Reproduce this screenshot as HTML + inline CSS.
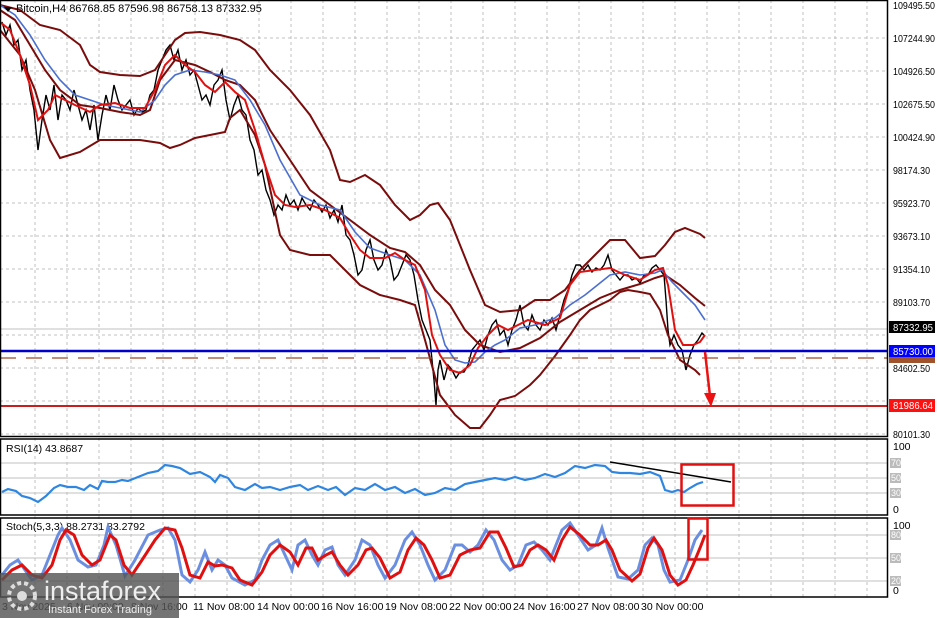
<!DOCTYPE html>
<html><head><meta charset="utf-8"><style>
html,body{margin:0;padding:0;background:#fff;width:937px;height:618px;overflow:hidden}
svg{display:block;font-family:"Liberation Sans",sans-serif}
</style></head><body>
<svg width="937" height="618" viewBox="0 0 937 618" xmlns="http://www.w3.org/2000/svg">
<rect width="937" height="618" fill="#fff"/>
<g stroke="#c0c0c0" stroke-dasharray="3,3" stroke-width="1">
<line x1="35" y1="0" x2="35" y2="597"/><line x1="67" y1="0" x2="67" y2="597"/><line x1="99" y1="0" x2="99" y2="597"/><line x1="131" y1="0" x2="131" y2="597"/><line x1="163" y1="0" x2="163" y2="597"/><line x1="195" y1="0" x2="195" y2="597"/><line x1="227" y1="0" x2="227" y2="597"/><line x1="259" y1="0" x2="259" y2="597"/><line x1="291" y1="0" x2="291" y2="597"/><line x1="323" y1="0" x2="323" y2="597"/><line x1="355" y1="0" x2="355" y2="597"/><line x1="387" y1="0" x2="387" y2="597"/><line x1="419" y1="0" x2="419" y2="597"/><line x1="451" y1="0" x2="451" y2="597"/><line x1="483" y1="0" x2="483" y2="597"/><line x1="515" y1="0" x2="515" y2="597"/><line x1="547" y1="0" x2="547" y2="597"/><line x1="579" y1="0" x2="579" y2="597"/><line x1="611" y1="0" x2="611" y2="597"/><line x1="643" y1="0" x2="643" y2="597"/><line x1="675" y1="0" x2="675" y2="597"/><line x1="707" y1="0" x2="707" y2="597"/><line x1="739" y1="0" x2="739" y2="597"/><line x1="771" y1="0" x2="771" y2="597"/><line x1="803" y1="0" x2="803" y2="597"/><line x1="835" y1="0" x2="835" y2="597"/><line x1="867" y1="0" x2="867" y2="597"/>
<line x1="0" y1="38" x2="887" y2="38"/><line x1="0" y1="71" x2="887" y2="71"/><line x1="0" y1="104" x2="887" y2="104"/><line x1="0" y1="137" x2="887" y2="137"/><line x1="0" y1="170" x2="887" y2="170"/><line x1="0" y1="203" x2="887" y2="203"/><line x1="0" y1="236" x2="887" y2="236"/><line x1="0" y1="269" x2="887" y2="269"/><line x1="0" y1="302" x2="887" y2="302"/><line x1="0" y1="335" x2="887" y2="335"/><line x1="0" y1="368" x2="887" y2="368"/><line x1="0" y1="401" x2="887" y2="401"/><line x1="0" y1="434" x2="887" y2="434"/>
</g>
<g stroke="#c0c0c0"><line x1="0" y1="463" x2="887" y2="463"/><line x1="0" y1="478" x2="887" y2="478"/><line x1="0" y1="493" x2="887" y2="493"/><line x1="0" y1="535" x2="887" y2="535"/><line x1="0" y1="558" x2="887" y2="558"/><line x1="0" y1="581" x2="887" y2="581"/><line x1="0" y1="329" x2="887" y2="329"/></g>
<polyline fill="none" stroke="#000" stroke-width="1.4" points="2,22 6,35 10,25 14,45 18,40 22,70 26,60 30,90 34,110 38,150 42,120 46,95 50,110 54,85 58,120 62,95 66,100 70,110 74,90 78,105 82,120 86,110 90,130 94,105 98,140 102,115 106,95 110,110 114,85 118,100 122,110 126,105 130,100 134,115 138,108 142,112 146,110 150,95 154,90 158,70 162,60 166,50 170,45 174,60 178,50 182,70 186,60 190,75 194,70 198,85 202,100 206,95 210,105 214,85 218,80 222,70 226,100 230,120 234,105 238,95 242,110 246,115 250,140 254,150 258,175 262,170 266,190 270,200 274,215 278,205 282,210 286,195 290,205 294,200 298,210 302,198 306,205 310,210 314,200 318,205 322,212 326,205 330,218 334,210 338,222 342,205 346,235 350,240 354,255 358,275 362,270 366,250 370,240 374,260 378,270 382,265 386,250 390,260 394,280 398,275 402,265 406,255 410,260 414,275 418,300 422,320 426,330 430,340 434,380 436,405 438,370 440,360 444,380 448,365 452,370 456,378 460,372 464,372 468,365 472,350 476,345 480,340 484,350 488,335 492,325 496,320 500,335 504,330 508,345 512,330 516,320 520,305 524,325 528,330 532,315 536,325 540,330 544,320 548,325 552,318 556,330 560,315 564,300 568,290 572,275 576,265 580,265 584,270 588,265 592,272 596,268 600,270 604,265 608,255 612,270 616,275 620,280 624,275 628,275 632,280 636,278 640,283 644,275 648,275 652,268 656,265 660,270 664,275 666,300 668,330 670,345 674,335 678,345 682,350 686,370 690,355 694,345 698,340 702,333 704,335"/>
<polyline fill="none" stroke="#7a0c0c" stroke-width="2" points="0,5 20,10 40,25 60,30 80,45 90,65 100,72 120,75 140,76 155,70 165,55 175,40 185,33 200,32 220,35 240,40 255,50 270,70 290,90 310,115 330,150 340,180 350,182 365,175 380,185 395,205 410,220 420,215 430,205 438,203 450,220 460,245 470,270 485,305 500,312 520,310 535,300 550,300 565,290 580,270 595,255 610,240 625,240 640,258 655,256 665,245 675,232 685,228 700,234 705,238"/>
<polyline fill="none" stroke="#7a0c0c" stroke-width="2" points="0,10 15,20 30,45 45,70 60,90 80,105 100,108 120,112 140,115 150,110 160,80 175,60 195,65 210,72 225,80 240,85 255,100 270,130 290,160 310,190 330,205 350,220 370,235 390,248 405,252 420,265 435,290 450,305 465,330 480,345 500,352 520,348 540,338 560,322 580,310 600,298 620,290 640,284 655,278 665,275 680,285 695,298 705,306"/>
<polyline fill="none" stroke="#7a0c0c" stroke-width="2" points="0,30 20,55 35,90 50,140 60,158 80,152 100,140 120,140 140,140 160,143 170,148 180,145 195,138 210,135 225,132 230,118 240,110 255,135 265,165 280,235 290,250 310,255 330,255 350,275 360,285 380,295 400,300 415,305 425,340 440,395 455,415 470,428 480,428 490,415 500,400 515,396 530,385 540,375 555,356 570,335 580,320 590,310 600,305 610,300 620,292 628,290 640,292 650,294 660,310 668,335 680,360 695,370 700,375"/>
<polyline fill="none" stroke="#4a6fd0" stroke-width="1.6" points="0,5 15,15 30,35 45,60 60,80 75,95 90,100 105,105 120,108 140,112 155,100 165,85 175,75 190,70 205,72 220,75 235,80 250,100 265,125 280,160 300,195 320,205 340,210 355,232 370,248 390,255 405,260 420,275 435,310 445,345 455,360 465,363 475,362 485,352 495,345 505,340 520,328 535,325 555,318 570,305 585,295 600,283 610,275 625,272 640,275 655,273 662,270 672,282 682,292 695,305 705,320"/>
<polyline fill="none" stroke="#e01010" stroke-width="2" points="0,22 10,30 20,55 30,85 38,120 48,110 55,95 65,100 75,105 90,112 100,105 115,103 130,108 145,108 155,90 165,65 175,55 185,65 195,72 205,85 215,92 225,82 235,92 245,100 255,130 265,165 275,195 285,205 295,207 310,205 325,210 340,218 350,235 360,250 370,258 385,258 395,253 405,260 415,265 425,290 432,335 440,355 450,370 460,373 470,365 478,348 488,335 498,325 508,330 518,325 528,320 545,325 560,318 570,285 580,272 595,270 610,268 625,275 640,280 655,270 663,268 668,285 675,330 683,345 693,345 700,342 705,335"/>
<line x1="0" y1="351" x2="887" y2="351" stroke="#0000c8" stroke-width="2.5"/>
<line x1="0" y1="358" x2="887" y2="358" stroke="#9a4a2a" stroke-width="1.2" stroke-dasharray="16,10"/>
<line x1="0" y1="406" x2="887" y2="406" stroke="#c81e1e" stroke-width="2"/>
<line x1="705" y1="352" x2="710" y2="396" stroke="#ee1111" stroke-width="2.5"/>
<polygon points="704,393 716,393 711,407" fill="#ee1111"/>
<g fill="none" stroke="#000" stroke-width="1.5">
<rect x="0.5" y="0.5" width="887" height="436"/>
<rect x="0.5" y="439" width="887" height="76"/>
<rect x="0.5" y="518" width="887" height="79"/>
</g>
<polygon points="4,7 12,7 8,12" fill="#000"/>
<text x="16" y="12" font-size="11" fill="#000">Bitcoin,H4  86768.85 87596.98 86758.13 87332.95</text>
<text x="6" y="452" font-size="10.5" fill="#000">RSI(14) 43.8687</text>
<polyline fill="none" stroke="#2f86e0" stroke-width="2.2" points="2,492 8,489 16,491 22,496 30,498 38,502 46,496 54,488 60,485 68,487 76,487 84,490 90,485 98,489 102,481 108,482 115,482 122,480 128,481 138,477 148,473 158,471 165,465 172,466 180,468 190,474 200,472 210,477 215,482 220,475 228,478 235,487 245,490 255,484 262,488 270,487 280,490 290,487 300,485 308,490 318,486 328,490 336,487 345,495 355,488 365,490 375,484 385,490 395,487 405,493 415,489 425,495 435,493 445,488 455,490 465,484 475,482 485,480 495,478 505,480 515,477 525,480 535,478 545,474 555,477 565,473 575,466 585,468 595,465 605,466 612,472 620,473 630,473 640,474 650,472 660,476 665,490 672,492 678,490 684,492 690,488 697,484 703,482"/>
<line x1="610" y1="462" x2="731" y2="482" stroke="#000" stroke-width="1.5"/>
<rect x="681.5" y="464.5" width="52" height="41" fill="none" stroke="#e01010" stroke-width="2.5"/>
<text x="6" y="530" font-size="10.5" fill="#000">Stoch(5,3,3) 88.2731 83.2792</text>
<polyline fill="none" stroke="#6b8fe0" stroke-width="3" points="2,575 10,565 18,560 25,570 32,580 42,575 50,555 58,535 62,528 70,540 78,560 88,567 96,565 104,545 108,527 116,545 125,576 135,560 148,535 160,530 168,528 175,540 182,575 190,582 198,570 205,552 212,570 218,560 225,565 232,578 245,585 255,580 262,560 270,545 278,540 285,555 292,570 298,545 305,540 312,555 318,565 325,550 332,547 338,565 345,575 355,560 362,540 370,545 378,565 385,578 395,565 405,540 412,532 420,545 428,565 435,580 445,570 455,545 462,545 470,552 478,545 486,530 494,540 502,560 510,570 518,565 526,545 534,542 542,550 550,560 556,545 562,530 570,523 578,535 588,550 596,545 602,528 608,548 618,577 628,579 638,570 645,545 652,538 658,545 664,570 670,582 680,580 688,560 695,540 702,530"/>
<polyline fill="none" stroke="#e01010" stroke-width="3" points="2,580 12,570 22,565 32,575 42,578 52,565 60,540 66,530 74,535 82,555 92,565 100,560 110,535 116,540 124,565 132,575 142,560 155,540 165,528 175,530 182,548 190,575 200,578 208,562 215,566 222,565 232,568 240,580 252,585 262,572 270,555 280,545 290,552 298,565 306,548 312,548 318,560 326,555 332,552 340,565 348,575 358,565 366,550 372,548 380,558 390,578 400,572 408,550 416,538 424,545 432,560 440,578 450,575 460,555 470,550 480,548 490,532 498,532 506,548 514,567 522,565 530,550 538,545 546,550 554,560 562,540 570,527 580,535 590,545 598,545 606,540 612,550 620,570 632,581 640,574 648,548 654,538 662,550 670,575 678,585 686,580 693,565 700,548 705,535"/>
<rect x="688.5" y="518.5" width="19" height="41" fill="none" stroke="#e01010" stroke-width="2.5"/>
<g font-size="10.5" fill="#000">
<text x="893" y="9" textLength="42" lengthAdjust="spacingAndGlyphs">109495.50</text><text x="893" y="42" textLength="42" lengthAdjust="spacingAndGlyphs">107244.90</text><text x="893" y="75" textLength="42" lengthAdjust="spacingAndGlyphs">104926.50</text><text x="893" y="108" textLength="42" lengthAdjust="spacingAndGlyphs">102675.50</text><text x="893" y="141" textLength="42" lengthAdjust="spacingAndGlyphs">100424.90</text><text x="893" y="174" textLength="37" lengthAdjust="spacingAndGlyphs">98174.30</text><text x="893" y="207" textLength="37" lengthAdjust="spacingAndGlyphs">95923.70</text><text x="893" y="240" textLength="37" lengthAdjust="spacingAndGlyphs">93673.10</text><text x="893" y="273" textLength="37" lengthAdjust="spacingAndGlyphs">91354.10</text><text x="893" y="306" textLength="37" lengthAdjust="spacingAndGlyphs">89103.70</text><text x="893" y="372" textLength="37" lengthAdjust="spacingAndGlyphs">84602.50</text><text x="893" y="438" textLength="37" lengthAdjust="spacingAndGlyphs">80101.30</text>
<text x="893" y="450">100</text><text x="893" y="513">0</text><text x="893" y="529">100</text><text x="893" y="594">0</text>
</g>
<rect x="889" y="321" width="46" height="12" fill="#000"/><text x="893" y="331" font-size="10.5" fill="#fff" textLength="40" lengthAdjust="spacingAndGlyphs">87332.95</text>
<rect x="889" y="345" width="46" height="12" fill="#0000ff"/><text x="893" y="355" font-size="10.5" fill="#fff" textLength="40" lengthAdjust="spacingAndGlyphs">85730.00</text>
<rect x="889" y="357" width="46" height="6" fill="#a0522d"/>
<rect x="889" y="399" width="46" height="13" fill="#ff1010"/><text x="893" y="409" font-size="10.5" fill="#fff" textLength="40" lengthAdjust="spacingAndGlyphs">81986.64</text>
<g font-size="9" fill="#fff"><rect x="890" y="458" width="11" height="10" fill="#bbb"/><text x="891" y="466">70</text><rect x="890" y="473" width="11" height="10" fill="#bbb"/><text x="891" y="481">50</text><rect x="890" y="488" width="11" height="10" fill="#bbb"/><text x="891" y="496">30</text>
<rect x="890" y="530" width="11" height="10" fill="#bbb"/><text x="891" y="538">80</text><rect x="890" y="553" width="11" height="10" fill="#bbb"/><text x="891" y="561">50</text><rect x="890" y="576" width="11" height="10" fill="#bbb"/><text x="891" y="584">20</text></g>
<g font-size="10.5" fill="#000"><text x="2" y="610">3 Nov 2025</text><text x="67" y="610">6 Nov 00:00</text><text x="131" y="610">8 Nov 16:00</text><text x="193" y="610">11 Nov 08:00</text><text x="257" y="610">14 Nov 00:00</text><text x="321" y="610">16 Nov 16:00</text><text x="385" y="610">19 Nov 08:00</text><text x="449" y="610">22 Nov 00:00</text><text x="513" y="610">24 Nov 16:00</text><text x="577" y="610">27 Nov 08:00</text><text x="641" y="610">30 Nov 00:00</text></g>
<rect x="0" y="573" width="179" height="45" fill="#555" opacity="0.82"/>
<circle cx="22" cy="596" r="13" fill="none" stroke="#ddd" stroke-width="4" stroke-dasharray="4,3"/>
<circle cx="22" cy="596" r="5" fill="#ddd"/>
<text x="44" y="600" font-size="27" fill="#eee">instaforex</text>
<text x="48" y="613" font-size="11" fill="#eee">Instant Forex Trading</text>
</svg>
</body></html>
